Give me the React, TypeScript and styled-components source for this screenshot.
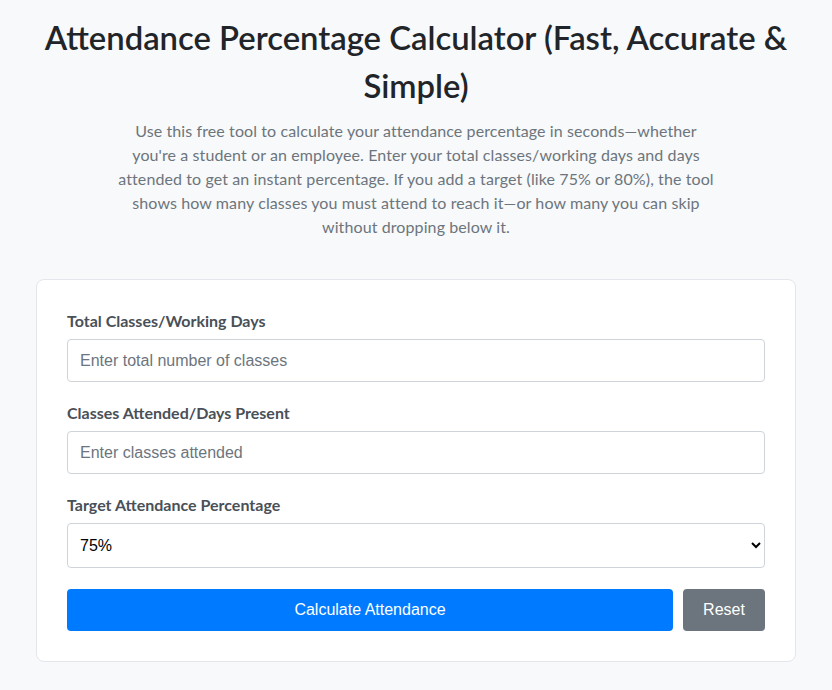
import styled, { createGlobalStyle } from "styled-components";

const GlobalStyle = createGlobalStyle`
  * {
    box-sizing: border-box;
  }
  body {
    margin: 0;
    background: #f8f9fa;
    color: #212529;
    font-family: "Lato", "Noto Sans", sans-serif;
  }
`;

const Page = styled.main`
  padding: 14px 16px 40px;
`;

const Title = styled.h1`
  margin: 0 0 9px;
  text-align: center;
  font-family: "Lato", sans-serif;
  font-size: 32.8px;
  font-weight: 600;
  line-height: 48px;
  color: #212529;
`;

const Intro = styled.p`
  max-width: 602px;
  margin: 0 auto 40px;
  text-align: center;
  font-size: 16px;
  letter-spacing: 0.1px;
  line-height: 24px;
  color: #6c757d;
`;

const Card = styled.section`
  max-width: 760px;
  margin: 0 auto;
  padding: 30px;
  background: #fff;
  border: 1px solid #e3e6ea;
  border-radius: 8px;
`;

const Field = styled.div`
  display: flex;
  flex-direction: column;
  gap: 7px;
  margin-bottom: 20px;
`;

const Label = styled.label`
  font-size: 16px;
  font-weight: 700;
  line-height: 22px;
  color: #495057;
`;

const Input = styled.input`
  width: 100%;
  height: 43px;
  padding: 0 12px;
  border: 1px solid #ced4da;
  border-radius: 4px;
  font-family: "Liberation Sans", Arial, sans-serif;
  font-size: 16px;
  color: #212529;
  background: #fff;

  &::placeholder {
    color: #6c757d;
  }
`;

const Select = styled.select`
  width: 100%;
  height: 45px;
  padding: 0 8px;
  border: 1px solid #ced4da;
  border-radius: 4px;
  font-family: "Liberation Sans", Arial, sans-serif;
  font-size: 16px;
  color: #000;
  background: #fff;
`;

const Actions = styled.div`
  display: flex;
  gap: 10px;
  padding-top: 1px;
`;

const Button = styled.button<{ $variant: "primary" | "secondary" }>`
  height: 42px;
  padding: 0 20px;
  border: 0;
  border-radius: 4px;
  font-family: "Liberation Sans", Arial, sans-serif;
  font-size: 16px;
  color: #fff;
  cursor: pointer;
  flex: ${(p) => (p.$variant === "primary" ? "1" : "0 0 82px")};
  background: ${(p) => (p.$variant === "primary" ? "#007bff" : "#6c757d")};
`;

export default function App() {
  return (
    <>
      <GlobalStyle />
      <Page>
        <Title>Attendance Percentage Calculator (Fast, Accurate &amp; Simple)</Title>
        <Intro>
          Use this free tool to calculate your attendance percentage in
          seconds—whether you're a student or an employee. Enter your total
          classes/working days and days attended to get an instant percentage.
          If you add a target (like 75% or 80%), the tool shows how many
          classes you must attend to reach it—or how many you can skip without
          dropping below it.
        </Intro>
        <Card>
          <Field>
            <Label htmlFor="total">Total Classes/Working Days</Label>
            <Input id="total" type="number" placeholder="Enter total number of classes" />
          </Field>
          <Field>
            <Label htmlFor="attended">Classes Attended/Days Present</Label>
            <Input id="attended" type="number" placeholder="Enter classes attended" />
          </Field>
          <Field>
            <Label htmlFor="target">Target Attendance Percentage</Label>
            <Select id="target" defaultValue="75">
              <option value="60">60%</option>
              <option value="65">65%</option>
              <option value="70">70%</option>
              <option value="75">75%</option>
              <option value="80">80%</option>
              <option value="85">85%</option>
              <option value="90">90%</option>
            </Select>
          </Field>
          <Actions>
            <Button $variant="primary">Calculate Attendance</Button>
            <Button $variant="secondary">Reset</Button>
          </Actions>
        </Card>
      </Page>
    </>
  );
}
